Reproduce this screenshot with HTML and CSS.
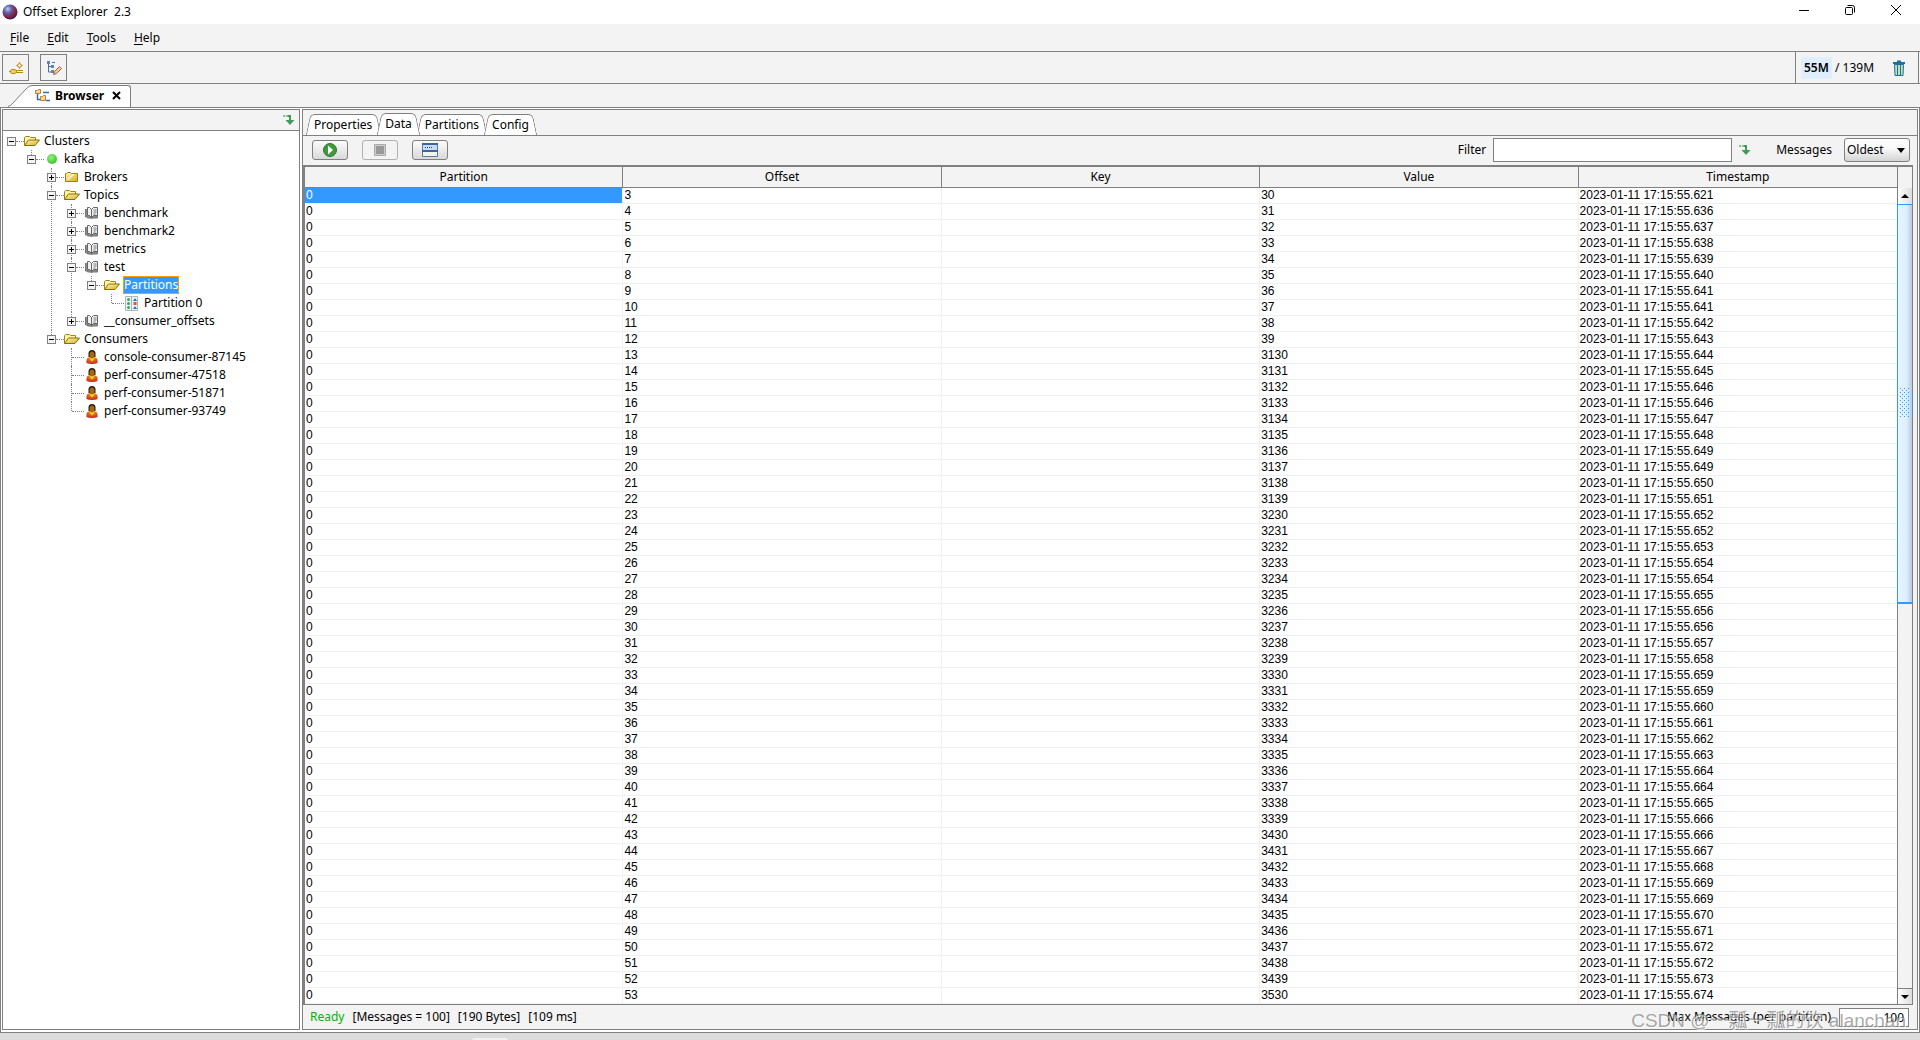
FILE: index.html
```html
<!DOCTYPE html>
<html lang="en">
<head>
<meta charset="utf-8">
<title>Offset Explorer 2.3</title>
<link rel="stylesheet" href="styles.css">
</head>
<body>
<svg class="defs" width="0" height="0" aria-hidden="true">
  <defs>
    <linearGradient id="gold" x1="0" y1="0" x2="1" y2="1"><stop offset="0" stop-color="#fff6b0"/><stop offset="1" stop-color="#d8ae20"/></linearGradient>
    <radialGradient id="ball" cx=".35" cy=".3" r=".75"><stop offset="0" stop-color="#c8c8f4"/><stop offset=".35" stop-color="#5a62a8"/><stop offset=".7" stop-color="#8c2040"/><stop offset="1" stop-color="#28205c"/></radialGradient>
    <radialGradient id="green" cx=".4" cy=".35" r=".7"><stop offset="0" stop-color="#9af07a"/><stop offset="1" stop-color="#2fc22b"/></radialGradient>
    <radialGradient id="robe" cx=".5" cy=".2" r=".8"><stop offset="0" stop-color="#f0a020"/><stop offset="1" stop-color="#c82418"/></radialGradient>
    <pattern id="dots" width="4" height="4" patternUnits="userSpaceOnUse"><path fill="#3399ff" d="M0 0h1v1H0zM2 2h1v1H2z"/></pattern>
  </defs>
  <symbol id="open" viewBox="0 0 16 12"><path d="M.5 10.500V2.500l1-1h4l1 1h5v2.500" fill="#fff3a6" stroke="#a08414"/><path d="M.5 10.500 4.500 5h11l-4.500 5.500z" fill="url(#gold)" stroke="#857010"/></symbol>
  <symbol id="closed" viewBox="0 0 16 12"><path d="M1.500 10.500V2.500h1l1-1h3l1 1h6v8z" fill="url(#gold)" stroke="#9a8018"/><path d="M3 8 9 3h2L4 9z" fill="#fffbd8"/></symbol>
  <symbol id="book" viewBox="0 0 16 14"><path d="M1.500 3v8h2v1h3l1 1 1-1h5V3" fill="#8a8a8a" stroke="#777"/><path d="M3.500 1.500h2l2 2v8l-2-2h-2zM7.500 3.500l2-2h4v8h-4l-2 2z" fill="#f0f0f0" stroke="#666"/><path d="M9.500 4h3M9.500 6h3M9.500 8h2" stroke="#777"/></symbol>
  <symbol id="person" viewBox="0 0 16 14"><path d="M2.500 13V10q0-2 3-3h4q4 1 4 3v3q-2 1-5.500 1t-5.500-1z" fill="url(#robe)"/><path d="m5 7.500 3 4 3-4z" fill="#ffd830"/><path d="M4.500 7V3.500Q4.500 0 8 0t3.500 3.500V7z" fill="#281c10"/><ellipse cx="8" cy="5" rx="2.500" ry="3.500" fill="#a86810"/></symbol>
  <symbol id="part" viewBox="0 0 14 15"><path d="M.5.500h12v14H.5z" fill="#eef6f2" stroke="#aab8b4"/><path d="M6.500 0v15" stroke="#aab8b4"/><circle cx="3.500" cy="3.500" r="1.500" fill="#30a868"/><circle cx="3.500" cy="7.500" r="1.500" fill="#30a868"/><circle cx="3.500" cy="11.500" r="1.500" fill="#30a868"/><path d="m10 2 2 3H8zM10 10l2 3H8z" fill="#3070c8"/><path d="M8.500 6h3v3h-3z" fill="#e05050"/></symbol>
  <symbol id="down" viewBox="0 0 12 12"><path d="M0 2h5" stroke="#7cc48a" stroke-width="2" stroke-dasharray="2 1" fill="none"/><path d="M5 1h3v5h3.500L7 11 2.500 6H6V3H5z" fill="#3f9b57"/></symbol>
</svg>

<header class="title">
  <svg width="16" height="16" viewBox="0 0 16 16"><circle cx="8" cy="8" r="7.500" fill="url(#ball)"/></svg>
  <h1>Offset Explorer&nbsp; 2.3</h1>
  <div class="wincontrols">
    <button aria-label="Minimize"><svg width="12" height="12" viewBox="0 0 12 12"><path d="M1 6.500h10"/></svg></button>
    <button aria-label="Restore"><svg width="12" height="12" viewBox="0 0 12 12"><rect x="1.500" y="3.500" width="7" height="7" rx="1"/><path d="M3.500 1.500h5q2 0 2 2v5"/></svg></button>
    <button aria-label="Close"><svg width="12" height="12" viewBox="0 0 12 12"><path d="m1 1 10 10M11 1 1 11"/></svg></button>
  </div>
</header>

<nav class="menu">
  <button><u>F</u>ile</button><button><u>E</u>dit</button><button><u>T</u>ools</button><button><u>H</u>elp</button>
</nav>

<div class="toolbar">
  <button class="tool" aria-label="Add connection"><svg width="16" height="16" viewBox="0 0 16 16" fill="#f0cc60" stroke="#b8860b"><path d="M1 11.500h2M8 10.500h7M8 12.500h7"/><path d="M3.500 9.500h3l2 1v2l-2 1h-3l-1-1v-2z"/><path d="m11.500 2.500 1 2 2 1-2 1-1 2-1-2-2-1 2-1z" fill="#fff4b8"/></svg></button>
  <button class="tool" aria-label="Edit tree"><svg width="16" height="16" viewBox="0 0 16 16" fill="none"><path d="M2.500 3v9H6M2.500 6.500H6M6 2.500h3" stroke="#4a6ea8"/><path d="M1 1h3v3H1zM5 5h3v3H5zM5 10h3v3H5z" fill="#5f82bc"/><path d="m7.500 14.500 1-3 5-5 2 2-5 5z" fill="#f0c898" stroke="#9c6a38"/></svg></button>
  <div class="memory">
    <span><b>55M</b> / 139M</span>
    <button aria-label="Collect garbage"><svg width="12" height="16" viewBox="0 0 12 16"><path d="M1.500 4.500h9l-.5 11H2z" fill="#bfe0b8" stroke="#1f6f9c"/><path d="M0 3h12M4 1.500h4" stroke="#1f6f9c" stroke-width="2"/><path d="M4.500 5v10M7.500 5v10" stroke="#1f6f9c"/></svg></button>
  </div>
</div>

<div class="viewtabs">
  <svg width="24" height="22" viewBox="0 0 24 22"><path d="M0 22Q3 21 5 18L18 4q3-3.500 6-3.500V22z" fill="#fff"/><path d="M0 21.500q3-.500 5-3.500L18 4q3-3.500 6-3.500" fill="none" stroke="#808080"/></svg>
  <div class="viewtab">
    <svg width="16" height="14" viewBox="0 0 16 14"><path d="M2.500 5v5.500H6M8 3.500h6M11 11.500h4" fill="none" stroke="#3070b0" stroke-width="1.500"/><path d="M.5 1.500h2l1-1h2v4h-5zM5.500 7.500h2l1-1h2v5h-5z" fill="#fbd89a" stroke="#c08030"/></svg>
    <b>Browser</b>
    <button aria-label="Close Browser"><svg width="9" height="9" viewBox="0 0 9 9"><path d="m1 1 7 7M8 1 1 8" stroke="#000" stroke-width="2"/></svg></button>
  </div>
</div>

<main class="work">
  <aside class="side">
    <div class="sidebar-head"><button aria-label="Refresh tree"><svg width="12" height="12"><use href="#down"/></svg></button></div>
    <ul class="tree">
      <li><div class="node"><button class="toggle minus" aria-label="Collapse"></button><svg width="16" height="12"><use href="#open"/></svg><span>Clusters</span></div>
        <ul>
          <li><div class="node"><button class="toggle minus" aria-label="Collapse"></button><svg width="16" height="12" viewBox="0 0 16 12"><circle cx="8" cy="6" r="5" fill="url(#green)"/></svg><span>kafka</span></div>
            <ul>
              <li><div class="node"><button class="toggle" aria-label="Expand"></button><svg width="16" height="12"><use href="#closed"/></svg><span>Brokers</span></div></li>
              <li><div class="node"><button class="toggle minus" aria-label="Collapse"></button><svg width="16" height="12"><use href="#open"/></svg><span>Topics</span></div>
                <ul>
                  <li><div class="node"><button class="toggle" aria-label="Expand"></button><svg width="16" height="14"><use href="#book"/></svg><span>benchmark</span></div></li>
                  <li><div class="node"><button class="toggle" aria-label="Expand"></button><svg width="16" height="14"><use href="#book"/></svg><span>benchmark2</span></div></li>
                  <li><div class="node"><button class="toggle" aria-label="Expand"></button><svg width="16" height="14"><use href="#book"/></svg><span>metrics</span></div></li>
                  <li><div class="node"><button class="toggle minus" aria-label="Collapse"></button><svg width="16" height="14"><use href="#book"/></svg><span>test</span></div>
                    <ul>
                      <li><div class="node"><button class="toggle minus" aria-label="Collapse"></button><svg width="16" height="12"><use href="#open"/></svg><span class="selected">Partitions</span></div>
                        <ul>
                          <li><div class="node leaf"><svg width="16" height="15"><use href="#part"/></svg><span>Partition 0</span></div></li>
                        </ul>
                      </li>
                    </ul>
                  </li>
                  <li><div class="node"><button class="toggle" aria-label="Expand"></button><svg width="16" height="14"><use href="#book"/></svg><span>__consumer_offsets</span></div></li>
                </ul>
              </li>
              <li><div class="node"><button class="toggle minus" aria-label="Collapse"></button><svg width="16" height="12"><use href="#open"/></svg><span>Consumers</span></div>
                <ul>
                  <li><div class="node leaf"><svg width="16" height="14"><use href="#person"/></svg><span>console-consumer-87145</span></div></li>
                  <li><div class="node leaf"><svg width="16" height="14"><use href="#person"/></svg><span>perf-consumer-47518</span></div></li>
                  <li><div class="node leaf"><svg width="16" height="14"><use href="#person"/></svg><span>perf-consumer-51871</span></div></li>
                  <li><div class="node leaf"><svg width="16" height="14"><use href="#person"/></svg><span>perf-consumer-93749</span></div></li>
                </ul>
              </li>
            </ul>
          </li>
        </ul>
      </li>
    </ul>
  </aside>

  <section class="detail">
    <div class="tabs">
      <button>Properties</button><button class="active">Data</button><button>Partitions</button><button>Config</button>
    </div>
    <div class="pane">
      <div class="actions">
        <button class="action" aria-label="Run"><svg width="14" height="14" viewBox="0 0 14 14"><circle cx="7" cy="7" r="6.500" fill="#3f9a3a" stroke="#2b7a30"/><path d="M5 2.500v9L10 7z" fill="#fff"/></svg></button>
        <button class="action" aria-label="Stop" disabled><svg width="12" height="12" viewBox="0 0 12 12"><path d="M.5.500h11v11H.5z" fill="#ccc" stroke="#aaa"/><path d="M2 2h8v8H2z" fill="#999"/></svg></button>
        <button class="action" aria-label="Show details"><svg width="16" height="14" viewBox="0 0 16 14"><path d="M.5.500h15v13H.5z" fill="#f4f4e4" stroke="#5878a8"/><path d="M0 0h16v2H0z" fill="#3c64a8"/><path d="M1 2h14v5H1z" fill="#c8dcf4"/><path d="M0 8h16" stroke="#3c64a8" stroke-width="2"/><path d="M3 4.500h8" stroke="#284878" stroke-dasharray="1 1"/></svg></button>
        <label class="push" for="filter">Filter</label>
        <input id="filter" type="text">
        <button class="apply" aria-label="Apply filter"><svg width="12" height="12"><use href="#down"/></svg></button>
        <label for="order">Messages</label>
        <div class="combo"><select id="order"><option>Oldest</option><option>Newest</option></select></div>
      </div>
      <div class="grid">
        <table>
          <thead><tr><th>Partition</th><th>Offset</th><th>Key</th><th>Value</th><th>Timestamp</th></tr></thead>
          <tbody id="rows"></tbody>
        </table>
        <div class="scroll">
          <div class="corner"></div>
          <button class="up" aria-label="Scroll up"></button>
          <div class="track"><div class="thumb"><svg width="10" height="30"><rect width="10" height="30" fill="url(#dots)"/></svg></div></div>
          <button class="dn" aria-label="Scroll down"></button>
        </div>
      </div>
      <div class="status">
        <span class="ready">Ready</span><span>[Messages = 100]</span><span>[190 Bytes]</span><span>[109 ms]</span>
        <label class="push" for="max">Max Messages (per partition)</label>
        <input id="max" type="text" value="100">
      </div>
    </div>
  </section>
</main>
<footer class="edge"><i></i></footer>
<div class="watermark">CSDN @一瓢一瓢的饮 alanchan</div>
<script src="rows.js"></script>
</body>
</html>
```
FILE: styles.css
```css
* { box-sizing: border-box; }

body {
  margin: 0;
  min-height: 100vh;
  display: flex;
  flex-direction: column;
  position: relative;
  background: #f3f3f3;
  color: #000;
  font: 12px/16px "Noto Sans", "Noto Sans CJK SC", sans-serif;
}

button, input, select { font: inherit; color: inherit; }
button { padding: 0; border: 0; background: none; }
svg { display: block; flex: none; }
.defs { position: absolute; }

.title {
  display: flex;
  align-items: center;
  gap: 5px;
  height: 24px;
  padding-left: 2px;
  background: #fff;
}
.title h1 { margin: 0; font-size: 12px; font-weight: 400; }
.wincontrols { display: flex; margin-left: auto; padding: 0 1px 4px 0; }
.wincontrols button { width: 46px; display: flex; justify-content: center; }
.wincontrols svg { fill: none; stroke: #000; }

.menu {
  display: flex;
  gap: 18px;
  height: 28px;
  padding: 1px 10px 0;
  border-bottom: 1px solid #808080;
}
.menu u { text-underline-offset: 2px; }

.toolbar {
  display: flex;
  align-items: center;
  gap: 11px;
  height: 32px;
  padding: 0 1px 0 2px;
  border-bottom: 1px solid #808080;
}
.tool {
  width: 27px;
  height: 27px;
  display: grid;
  place-items: center;
  border: 1px solid #808080;
}
.memory {
  margin-left: auto;
  width: 124px;
  align-self: stretch;
  display: flex;
  align-items: center;
  justify-content: space-between;
  padding: 0 13px 0 5px;
  border: solid #808080;
  border-width: 0 1px;
}
.memory b {
  display: inline-block;
  padding: 3px;
  background: #dfefff;
  font-weight: 600;
}

.viewtabs { display: flex; align-items: flex-end; height: 23px; padding-left: 8px; }
.viewtab {
  display: flex;
  align-items: center;
  gap: 4px;
  height: 22px;
  padding: 0 9px 2px 3px;
  background: #fff;
  border: solid #808080;
  border-width: 1px 1px 0 0;
  border-radius: 0 3px 0 0;
}
.viewtab b { font-weight: 700; }
.viewtab button { margin-left: 4px; }

.work {
  flex: 1;
  display: flex;
  gap: 2px;
  padding: 1px 1px 2px;
  background: #fff;
  border: 1px solid #808080;
}
.side {
  width: 298px;
  display: flex;
  flex-direction: column;
  background: #f3f3f3;
  border: 1px solid #808080;
}
.sidebar-head { display: flex; justify-content: flex-end; height: 20px; padding: 4px; }

.tree, .tree ul { margin: 0; padding: 0; list-style: none; }
.tree { flex: 1; padding: 1px 0 0 4px; background: #fff; border-top: 1px solid #808080; }
.tree ul { padding-left: 20px; }
.tree li { position: relative; }
.tree ul > li::before {
  content: "";
  position: absolute;
  left: 4px;
  top: 0;
  bottom: 0;
  border-left: 1px dotted #808080;
}
.tree ul > li:last-child::before { bottom: auto; height: 9px; }
.node { position: relative; display: flex; align-items: center; height: 18px; }
.node::before {
  content: "";
  order: 1;
  width: 8px;
  border-top: 1px dotted #808080;
}
.node svg, .node span { order: 2; }
.node.leaf::before { width: 12px; margin-left: 5px; }
.node span { margin-left: 3px; padding: 0 1px; line-height: 18px; }
.node .selected { background: #39f; color: #fff; outline: 1px solid #f5a000; outline-offset: -1px; }
.toggle {
  position: relative;
  width: 9px;
  height: 9px;
  border: 1px solid #808080;
  background: linear-gradient(#000, #000) center / 5px 1px no-repeat, linear-gradient(#000, #000) center / 1px 5px no-repeat, #f3f3f3;
}
.toggle.minus { background: linear-gradient(#000, #000) center / 5px 1px no-repeat, #f3f3f3; }

.detail {
  flex: 1;
  min-width: 0;
  display: flex;
  flex-direction: column;
  border: 1px solid #808080;
}
.tabs { display: flex; align-items: flex-end; height: 25px; padding-left: 3px; background: #f3f3f3; }
.tabs button {
  position: relative;
  isolation: isolate;
  height: 21px;
  margin-right: -3px;
  padding: 0 8px;
}
.tabs .active { height: 22px; z-index: 1; }
.tabs button::before, .tabs button::after {
  content: "";
  position: absolute;
  z-index: -1;
  top: 0;
  bottom: 0;
  background: #fff;
  border-top: 1px solid #808080;
}
.tabs button::before {
  left: 2px;
  right: 50%;
  border-left: 1px solid #808080;
  border-radius: 5px 0 0 0;
  transform: skewX(-12deg);
}
.tabs button::after {
  left: 40%;
  right: 2px;
  border-right: 1px solid #808080;
  border-radius: 0 5px 0 0;
  transform: skewX(12deg);
}

.pane { flex: 1; display: flex; flex-direction: column; padding-right: 4px; background: #f3f3f3; border-top: 1px solid #808080; }
.actions { display: flex; align-items: center; height: 29px; padding: 0 3px 1px 9px; }
.action {
  width: 36px;
  height: 20px;
  margin-right: 14px;
  display: grid;
  place-items: center;
  border: 1px solid #808080;
  border-radius: 3px;
  background: linear-gradient(#fdfdfd, #d8d8d8);
}
.action:disabled { border-color: #b0b0b0; background: #f3f3f3; }
.push { margin-left: auto; }
input { background: #fff; border: 1px solid #808080; border-radius: 0; outline: 0; }
#filter { width: 239px; height: 24px; margin: 0 7px; }
.apply { margin-right: 25px; }
.combo {
  position: relative;
  margin-left: 12px;
  border: 1px solid #808080;
  border-radius: 3px;
  background: linear-gradient(#fbfbfb 40%, #d4d4d4);
}
.combo select {
  display: block;
  appearance: none;
  width: 64px;
  height: 22px;
  padding: 0 2px;
  border: 0;
  background: none;
}
.combo::after {
  content: "";
  position: absolute;
  right: 4px;
  top: 9px;
  border: solid transparent;
  border-width: 5px 4px 0;
  border-top-color: #000;
  pointer-events: none;
}

.grid { display: flex; border: solid #808080; border-width: 2px 1px 1px 2px; background: #fff; }
table { flex: 1; width: 100%; min-width: 0; table-layout: fixed; border-collapse: separate; border-spacing: 0; }
th {
  height: 21px;
  padding: 0;
  background: #f3f3f3;
  border: solid #808080;
  border-width: 0 1px 1px 0;
  font-weight: 400;
}
th:last-child, td:last-child { border-right: 0; }
td {
  height: 16px;
  padding: 0 1px;
  border: solid #f0f0f0;
  border-width: 0 1px 1px 0;
  font: 12px/15px "Liberation Sans", Arial, sans-serif;
}
.picked { background: #39f; color: #fff; }

.scroll { flex: none; width: 15px; display: flex; flex-direction: column; border-left: 1px solid #808080; background: #f3f3f3; }
.corner { height: 21px; }
.up, .dn { height: 16px; display: grid; place-items: center; background: linear-gradient(90deg, #fff, #ddd); }
.up::after, .dn::after { content: ""; border: solid transparent; border-width: 0 4px 4px; border-bottom-color: #000; }
.dn { border-top: 1px solid #808080; }
.dn::after { border-width: 4px 4px 0; border-top-color: #000; }
.track { flex: 1; }
.thumb {
  height: 51%;
  margin-left: -1px;
  display: grid;
  place-items: center;
  border: solid #39f;
  border-width: 1px 0 2px 1px;
  background: linear-gradient(90deg, #e8f4ff, #ddefff 60%, #b8ccdd);
}

.status { flex: 1; display: flex; align-items: center; gap: 8px; min-height: 24px; padding: 0 4px 0 7px; }
.ready { color: #00b400; }
#max { width: 70px; height: 19px; padding: 0 4px; text-align: right; }

.edge { display: flex; align-items: flex-end; height: 8px; padding-left: 472px; background: #dcdcdc; }
.edge i { width: 36px; height: 3px; background: #f0f0f0; border-radius: 3px 3px 0 0; }

.watermark {
  position: absolute;
  right: 14px;
  bottom: 8px;
  color: rgba(120, 120, 120, .65);
  text-shadow: 1px 1px 0 rgba(255, 255, 255, .7);
  font: 19px/24px "Liberation Sans", "Noto Sans CJK SC", sans-serif;
  pointer-events: none;
}
```
FILE: rows.js
```js
// Millisecond part of each message timestamp, in offset order.
const millis = [
  621, 636, 637, 638, 639, 640, 641, 641, 642, 643,
  644, 645, 646, 646, 647, 648, 649, 649, 650, 651,
  652, 652, 653, 654, 654, 655, 656, 656, 657, 658,
  659, 659, 660, 661, 662, 663, 664, 664, 665, 666,
  666, 667, 668, 669, 669, 670, 671, 672, 672, 673, 674
];
// Values run in blocks of ten: 30.., 3130.., 3230.. and so on.
const bases = [30, 3130, 3230, 3330, 3430, 3530];

const body = document.getElementById("rows");
millis.forEach((ms, i) => {
  const value = bases[Math.floor(i / 10)] + (i % 10);
  const row = body.insertRow();
  ["0", i + 3, "", value, "2023-01-11 17:15:55." + ms].forEach(text => {
    row.insertCell().textContent = text;
  });
});
body.rows[0].cells[0].className = "picked";
```
